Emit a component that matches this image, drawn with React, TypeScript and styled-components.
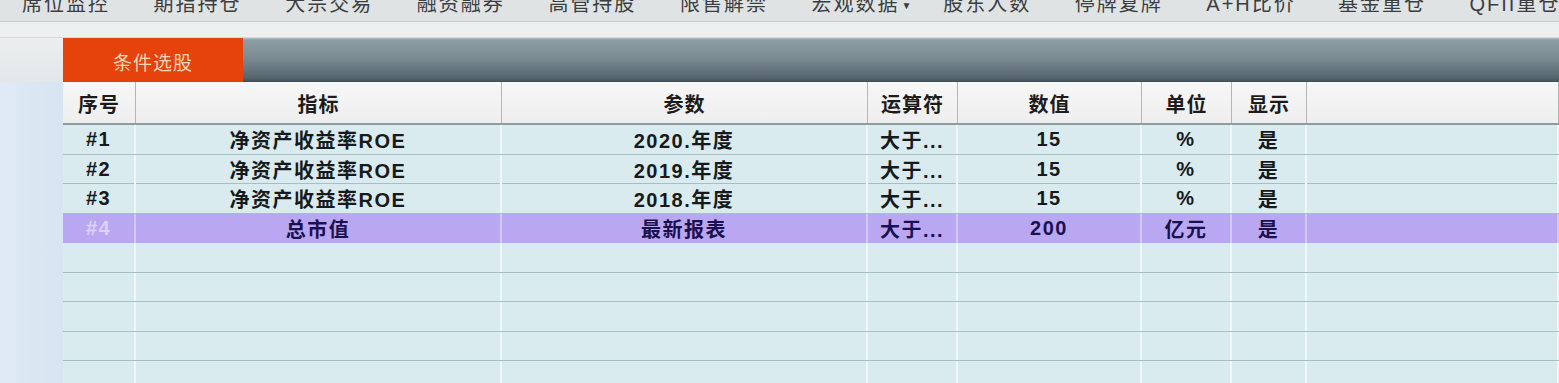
import styled, { createGlobalStyle } from 'styled-components'

const GlobalStyle = createGlobalStyle`
  html, body {
    margin: 0;
    padding: 0;
    background: #dde9f4;
    overflow: hidden;
  }
  body {
    font-family: "Liberation Sans", "Noto Sans CJK SC", sans-serif;
  }
`

const menuItems = ['席位监控', '期指持仓', '大宗交易', '融资融券', '高管持股', '限售解禁', '宏观数据', '股东人数', '停牌复牌', 'A+H比价', '基金重仓', 'QFII重仓']

type Row = { no: string; name: string; param: string; op: string; value: string; unit: string; show: string }

const rows: Row[] = [
  { no: '#1', name: '净资产收益率ROE', param: '2020.年度', op: '大于...', value: '15', unit: '%', show: '是' },
  { no: '#2', name: '净资产收益率ROE', param: '2019.年度', op: '大于...', value: '15', unit: '%', show: '是' },
  { no: '#3', name: '净资产收益率ROE', param: '2018.年度', op: '大于...', value: '15', unit: '%', show: '是' },
  { no: '#4', name: '总市值', param: '最新报表', op: '大于...', value: '200', unit: '亿元', show: '是' },
]

const headers = ['序号', '指标', '参数', '运算符', '数值', '单位', '显示', '']

export default function App() {
  return (
    <>
      <GlobalStyle />
      <Page>
        <MenuBar>
          {menuItems.map((m) => (
            <MenuItem key={m}>
              {m}
              {m === '宏观数据' && <Caret>▼</Caret>}
            </MenuItem>
          ))}
        </MenuBar>
        <Strip />
        <TabBar>
          <TabLead />
          <Tab>条件选股</Tab>
          <TabRest />
        </TabBar>
        <Body>
          <Sidebar />
          <Table>
            <HeaderRow>
              {headers.map((h, i) => (
                <HeaderCell key={i}>{h}</HeaderCell>
              ))}
            </HeaderRow>
            {rows.map((r, i) => {
              const active = i === rows.length - 1
              return (
                <DataRow key={r.no} $active={active}>
                  <Cell $active={active} $muted={active}>{r.no}</Cell>
                  <Cell $active={active}>{r.name}</Cell>
                  <Cell $active={active}>{r.param}</Cell>
                  <Cell $active={active}>{r.op}</Cell>
                  <Cell $active={active}>{r.value}</Cell>
                  <Cell $active={active}>{r.unit}</Cell>
                  <Cell $active={active}>{r.show}</Cell>
                  <Cell $active={active} />
                </DataRow>
              )
            })}
            {Array.from({ length: 5 }).map((_, i) => (
              <DataRow key={'e' + i}>
                {headers.map((_, j) => (
                  <Cell key={j} />
                ))}
              </DataRow>
            ))}
          </Table>
        </Body>
      </Page>
    </>
  )
}

const cols = '73px 366px 366px 90px 184px 90px 75px 1fr'

const Page = styled.div`
  width: 1559px;
  height: 383px;
  display: flex;
  flex-direction: column;
  overflow: hidden;
`

const MenuBar = styled.div`
  height: 22px;
  flex-shrink: 0;
  display: grid;
  grid-template-columns: repeat(12, 131.6px);
  padding-left: 22px;
  background: #dfe3e4;
  border-bottom: 1px solid #c6cbcc;
  overflow: hidden;
  box-sizing: border-box;
`

const MenuItem = styled.div`
  margin-top: -8px;
  font-size: 20px;
  line-height: 24px;
  letter-spacing: 2px;
  color: #3b3d3f;
  white-space: nowrap;
`

const Caret = styled.span`
  font-size: 10px;
  vertical-align: middle;
  margin-left: 2px;
`

const Strip = styled.div`
  height: 16px;
  flex-shrink: 0;
  background: #eef0f0;
  border-bottom: 1px solid #d5d9da;
  box-sizing: border-box;
`

const TabBar = styled.div`
  height: 44px;
  flex-shrink: 0;
  display: flex;
`

const TabLead = styled.div`
  width: 63px;
  background: linear-gradient(#eceeee, #e3e7e9);
`

const Tab = styled.div`
  width: 180px;
  background: #e5420c;
  color: #fbd7b8;
  font-size: 19px;
  letter-spacing: 1px;
  display: flex;
  align-items: center;
  justify-content: center;
  padding-top: 2px;
  box-sizing: border-box;
`

const TabRest = styled.div`
  flex: 1;
  background: linear-gradient(#b4c0c4 0px, #8d9da4 2px, #7b8b92 20px, #56656d 40px, #404e55 44px);
`

const Body = styled.div`
  flex: 1;
  display: flex;
`

const Sidebar = styled.div`
  width: 63px;
  background: linear-gradient(90deg, #dfeaf5, #d6e5f2);
  flex-shrink: 0;
`

const Table = styled.div`
  flex: 1;
  display: flex;
  flex-direction: column;
  background: #d9ebef;
`

const HeaderRow = styled.div`
  display: grid;
  grid-template-columns: ${cols};
  height: 43px;
  background: linear-gradient(#f7f7f7, #eeeeee);
  border-bottom: 2px solid #8c9c9f;
  box-sizing: border-box;
`

const HeaderCell = styled.div`
  display: flex;
  align-items: center;
  justify-content: center;
  font-size: 20px;
  font-weight: 700;
  letter-spacing: 1px;
  color: #1c1c1c;
  border-right: 1px solid #b3b6b7;
  padding-top: 2px;
`

const DataRow = styled.div<{ $active?: boolean }>`
  display: grid;
  grid-template-columns: ${cols};
  height: 29.5px;
  flex-shrink: 0;
  box-sizing: border-box;
  background: ${(p) => (p.$active ? '#b9a7f2' : '#d9ebef')};
  border-bottom: 1px solid ${(p) => (p.$active ? '#b9a7f2' : '#a4c0c5')};
`

const Cell = styled.div<{ $active?: boolean; $muted?: boolean }>`
  display: flex;
  align-items: center;
  justify-content: center;
  font-size: 20px;
  font-weight: 700;
  letter-spacing: 1.5px;
  color: ${(p) => (p.$muted ? '#ddd3ff' : p.$active ? '#1b1150' : '#161a1c')};
  border-right: 2px solid ${(p) => (p.$active ? '#d2c8f6' : '#eef8fa')};
  white-space: nowrap;
`
